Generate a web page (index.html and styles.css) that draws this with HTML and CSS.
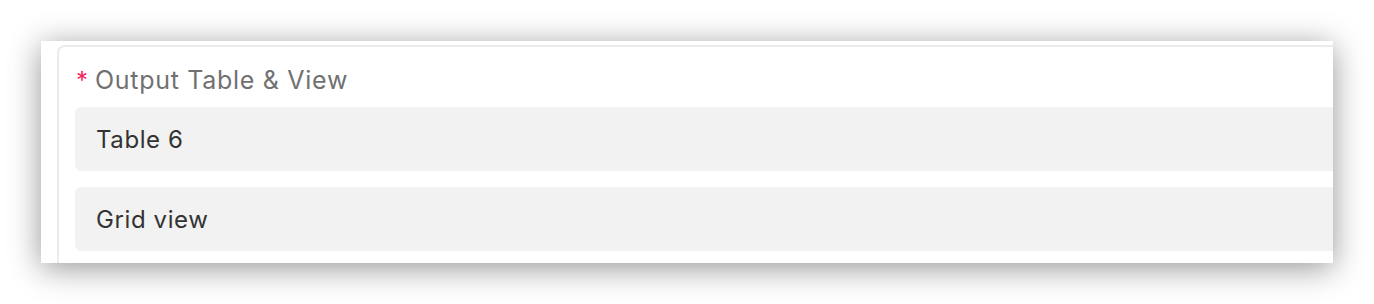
FILE: index.html
```html
<!DOCTYPE html>
<html lang="en">
<head>
<meta charset="utf-8">
<title>Output Table &amp; View</title>
<link rel="stylesheet" href="styles.css">
</head>
<body>
<div class="panel">
  <div class="card">
    <div class="label"><span class="req">*</span><span class="label-text">Output Table &amp; View</span></div>
    <div class="fields">
      <div class="field">Table 6</div>
      <div class="field">Grid view</div>
    </div>
  </div>
</div>
</body>
</html>
```
FILE: styles.css
```css
html, body {
  margin: 0;
  padding: 0;
  background: #ffffff;
}
body {
  padding: 41px 0 41px 41px;
  min-height: 304px;
  box-sizing: border-box;
  font-family: Inter, "Noto Sans", "Liberation Sans", sans-serif;
}
.panel {
  width: 1292px;
  height: 222px;
  background: #ffffff;
  overflow: hidden;
  box-shadow: 0 5px 30px rgba(0, 0, 0, 0.42);
  padding: 4px 0 0 16px;
  box-sizing: border-box;
}
.card {
  border-top: 2px solid #ebebeb;
  border-left: 2px solid #ebebeb;
  border-top-left-radius: 8px;
  padding: 17px 0 0 16px;
  width: 1400px;
  height: 300px;
  box-sizing: border-box;
}
.label {
  display: flex;
  align-items: baseline;
  gap: 7px;
  height: 32px;
  line-height: 32px;
  font-size: 25px;
  margin-left: 1px;
}
.req {
  color: #f2285e;
  font-size: 24px;
}
.label-text {
  color: #717171;
  letter-spacing: 0.7px;
}
.fields {
  display: flex;
  flex-direction: column;
  gap: 16px;
  margin-top: 11px;
}
.field {
  height: 64px;
  background: #f2f2f2;
  border-radius: 6px;
  display: flex;
  align-items: center;
  padding: 0 21px;
  font-size: 24px;
  letter-spacing: 0.6px;
  color: #333333;
}
```
